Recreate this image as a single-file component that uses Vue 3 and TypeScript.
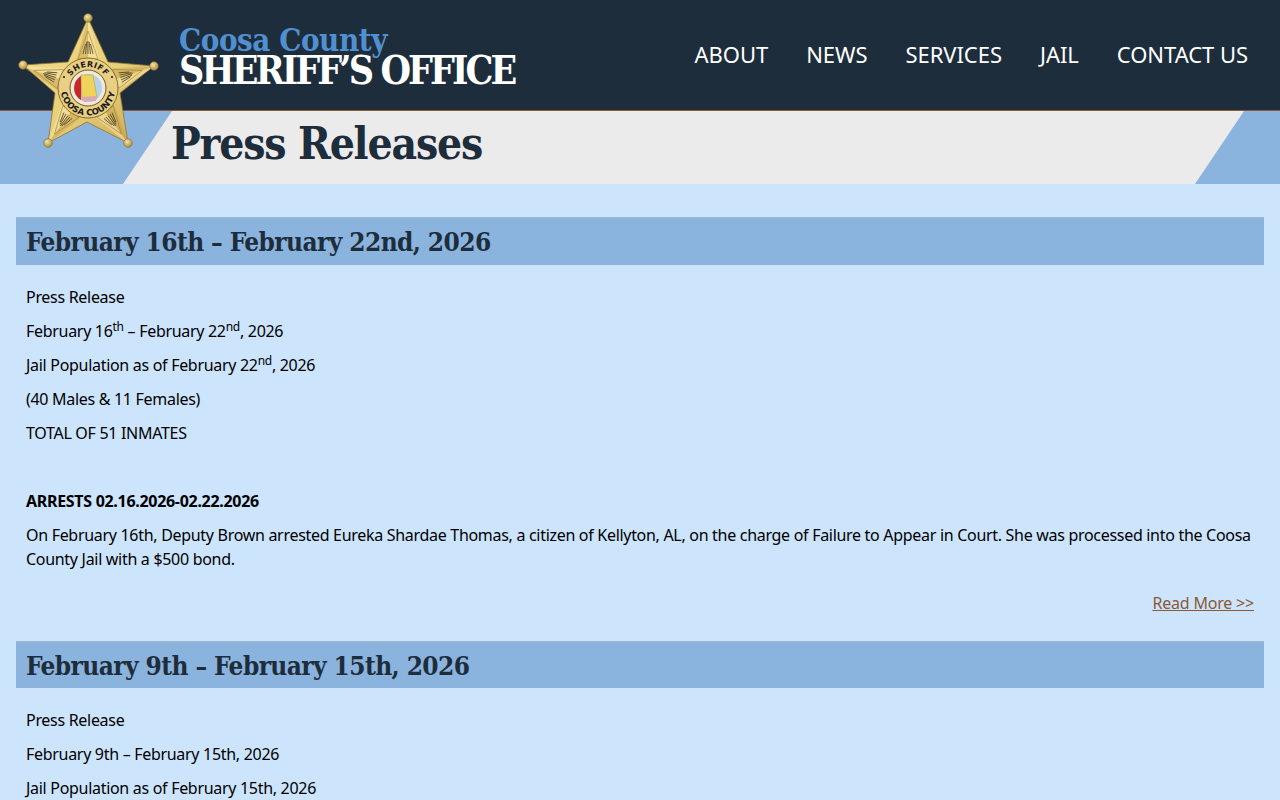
<script setup lang="ts">
const nav: string[] = ['ABOUT', 'NEWS', 'SERVICES', 'JAIL', 'CONTACT US']
const rays = [0, 72, 144, 216, 288]
const balls: [number, number][] = [[88, 18], [154, 66], [128, 143], [48, 143], [23, 65]]
</script>

<template>
  <div class="page">
    <header class="top">
      <div class="brand">
        <div class="county">Coosa County</div>
        <div class="office">SHERIFF’S OFFICE</div>
      </div>
      <nav class="nav">
        <a v-for="item in nav" :key="item" href="#">{{ item }}</a>
      </nav>
    </header>

    <div class="band">
      <div class="plate"><h1>Press Releases</h1></div>
    </div>

    <svg class="star" viewBox="16 10 146 142" aria-hidden="true">
      <defs>
        <linearGradient id="gold" x1="0" y1="0" x2="1" y2="1">
          <stop offset="0" stop-color="#f3dc8e" />
          <stop offset="0.55" stop-color="#e8cf7a" />
          <stop offset="1" stop-color="#c9a550" />
        </linearGradient>
        <radialGradient id="ball" cx="0.4" cy="0.35" r="0.7">
          <stop offset="0" stop-color="#f5e5a6" />
          <stop offset="1" stop-color="#a9873a" />
        </radialGradient>
        <path id="seal-top" d="M67 88 A21 21 0 0 1 109 88" />
        <path id="seal-bot" d="M60.500 88 A27.500 27.500 0 0 0 115.500 88" />
      </defs>
      <polygon
        points="88,18 108,62 154,66 120,93 128,143 87,122 48,143 55,93 23,65 68,62"
        fill="url(#gold)"
        stroke="#8f7230"
        stroke-width="0.8"
      />
      <g v-for="r in rays" :key="r" :transform="`rotate(${r} 88 88)`">
        <polygon points="88,18 100,62 88,62" fill="#f7e8ac" opacity="0.55" />
        <polygon points="88,18 76,62 88,62" fill="#bd9a48" opacity="0.4" />
        <polygon points="88,31 98,59 78,59" fill="none" stroke="#a88a3e" stroke-width="0.7" />
        <path d="M83 54 L85.500 44 M85.500 54 L86.800 42 M88 54 V41 M90.500 54 L89.200 42 M93 54 L90.500 44" stroke="#4d4124" stroke-width="0.8" />
      </g>
      <circle v-for="(b, i) in balls" :key="i" :cx="b[0]" :cy="b[1]" r="4.300" fill="url(#ball)" stroke="#8a6c28" stroke-width="0.6" />
      <circle cx="88" cy="88" r="30" fill="#e8cf84" stroke="#8a6f2e" stroke-width="1" />
      <circle cx="64" cy="77" r="1.100" fill="#2a2416" />
      <circle cx="112" cy="77" r="1.100" fill="#2a2416" />
      <circle cx="88" cy="88" r="18" fill="#efe9d6" stroke="#6d5a2c" stroke-width="1" />
      <circle cx="88" cy="88" r="14" fill="#b4d3ea" />
      <path d="M81 75.900 A14 14 0 0 0 81 100.100 Z" fill="#c9262c" />
      <path d="M81 75 L93 75 L97 98 L82 100 Z" fill="#efd35a" stroke="#b0963a" stroke-width="0.5" />
      <path d="M82 97 L97 96 L96 101 L84 102 Z" fill="#d9a7b5" />
      <text class="seal"><textPath href="#seal-top" startOffset="50%" text-anchor="middle">SHERIFF</textPath></text>
      <text class="seal wide"><textPath href="#seal-bot" startOffset="50%" text-anchor="middle">COOSA COUNTY</textPath></text>
    </svg>

    <main class="content">
      <article class="release">
        <h2>February 16th – February 22nd, 2026</h2>
        <div class="body">
          <p>Press Release</p>
          <p>February 16<sup>th</sup> – February 22<sup>nd</sup>, 2026</p>
          <p>Jail Population as of February 22<sup>nd</sup>, 2026</p>
          <p>(40 Males &amp; 11 Females)</p>
          <p>TOTAL OF 51 INMATES</p>
          <p>&nbsp;</p>
          <p><strong>ARRESTS 02.16.2026-02.22.2026</strong></p>
          <p>On February 16th, Deputy Brown arrested Eureka Shardae Thomas, a citizen of Kellyton, AL, on the charge of Failure to Appear in Court. She was processed into the Coosa County Jail with a $500 bond.</p>
          <div class="more"><a href="#">Read More &gt;&gt;</a></div>
        </div>
      </article>
      <article class="release">
        <h2>February 9th – February 15th, 2026</h2>
        <div class="body">
          <p>Press Release</p>
          <p>February 9th – February 15th, 2026</p>
          <p>Jail Population as of February 15th, 2026</p>
        </div>
      </article>
    </main>
  </div>
</template>

<style>
html, body { margin: 0; background: #cde4fd; overflow: hidden; }
</style>

<style scoped>
.page {
  position: relative;
  height: 800px;
  overflow: hidden;
  background: #cde4fd;
  font-family: "Noto Sans", "Open Sans", sans-serif;
  color: #000;
}
.top {
  height: 110px;
  background: #1e2d3b;
  border-bottom: 1px solid #8a5a33;
  display: flex;
  justify-content: space-between;
  padding: 0 32px 0 179px;
}
.brand {
  padding-top: 21px;
  font-family: "DejaVu Serif Condensed", "DejaVu Serif", serif;
  font-weight: 700;
}
.county {
  color: #5190d0;
  font-size: 31px;
  line-height: 38px;
  letter-spacing: -0.45px;
  white-space: nowrap;
}
.office {
  color: #fff;
  font-size: 39px;
  line-height: 40px;
  margin-top: -9px;
  letter-spacing: -2.9px;
  white-space: nowrap;
}
.nav {
  display: flex;
  gap: 38px;
  padding-top: 39px;
  font-size: 22px;
  line-height: 30px;
}
.nav a {
  color: #fff;
  text-decoration: none;
  letter-spacing: -0.05px;
}
.band {
  height: 73px;
  background: #8ab3de;
  display: flex;
}
.plate {
  margin-left: 123px;
  width: 1121px;
  height: 73px;
  background: #ebebeb;
  clip-path: polygon(49px 0, 100% 0, 1072px 100%, 0 100%);
  box-sizing: border-box;
  padding-left: 48px;
}
h1 {
  margin: 0;
  font-family: "DejaVu Serif Condensed", "DejaVu Serif", serif;
  font-weight: 700;
  font-size: 44px;
  line-height: 66px;
  letter-spacing: -1.2px;
  color: #1e2d3b;
}
.star {
  position: absolute;
  left: 16px;
  top: 10px;
  width: 146px;
  height: 142px;
}
.seal {
  font-family: "DejaVu Sans", sans-serif;
  font-size: 8px;
  font-weight: 700;
  letter-spacing: 0.4px;
  fill: #1b1a14;
}
.seal.wide {
  font-size: 8.500px;
  letter-spacing: 0.1px;
}
.content {
  padding: 33.300px 16px 0;
}
.release {
  height: 423.600px;
}
h2 {
  margin: 0;
  height: 47.400px;
  box-sizing: border-box;
  background: #8ab3de;
  border-top: 1px solid #9db5cf;
  padding-left: 10px;
  font-family: "DejaVu Serif Condensed", "DejaVu Serif", serif;
  font-weight: 700;
  font-size: 26px;
  line-height: 48px;
  letter-spacing: -0.6px;
  color: #1e2d3b;
}
.body {
  padding: 19.900px 10px 0;
  font-size: 16px;
  line-height: 24px;
  letter-spacing: -0.3px;
}
p {
  margin: 0 0 10px;
}
sup {
  font-size: 12px;
  line-height: 0;
}
strong {
  font-weight: 700;
}
.more {
  text-align: right;
  padding-top: 10px;
}
.more a {
  color: #8a5a33;
  letter-spacing: -0.2px;
}
</style>
